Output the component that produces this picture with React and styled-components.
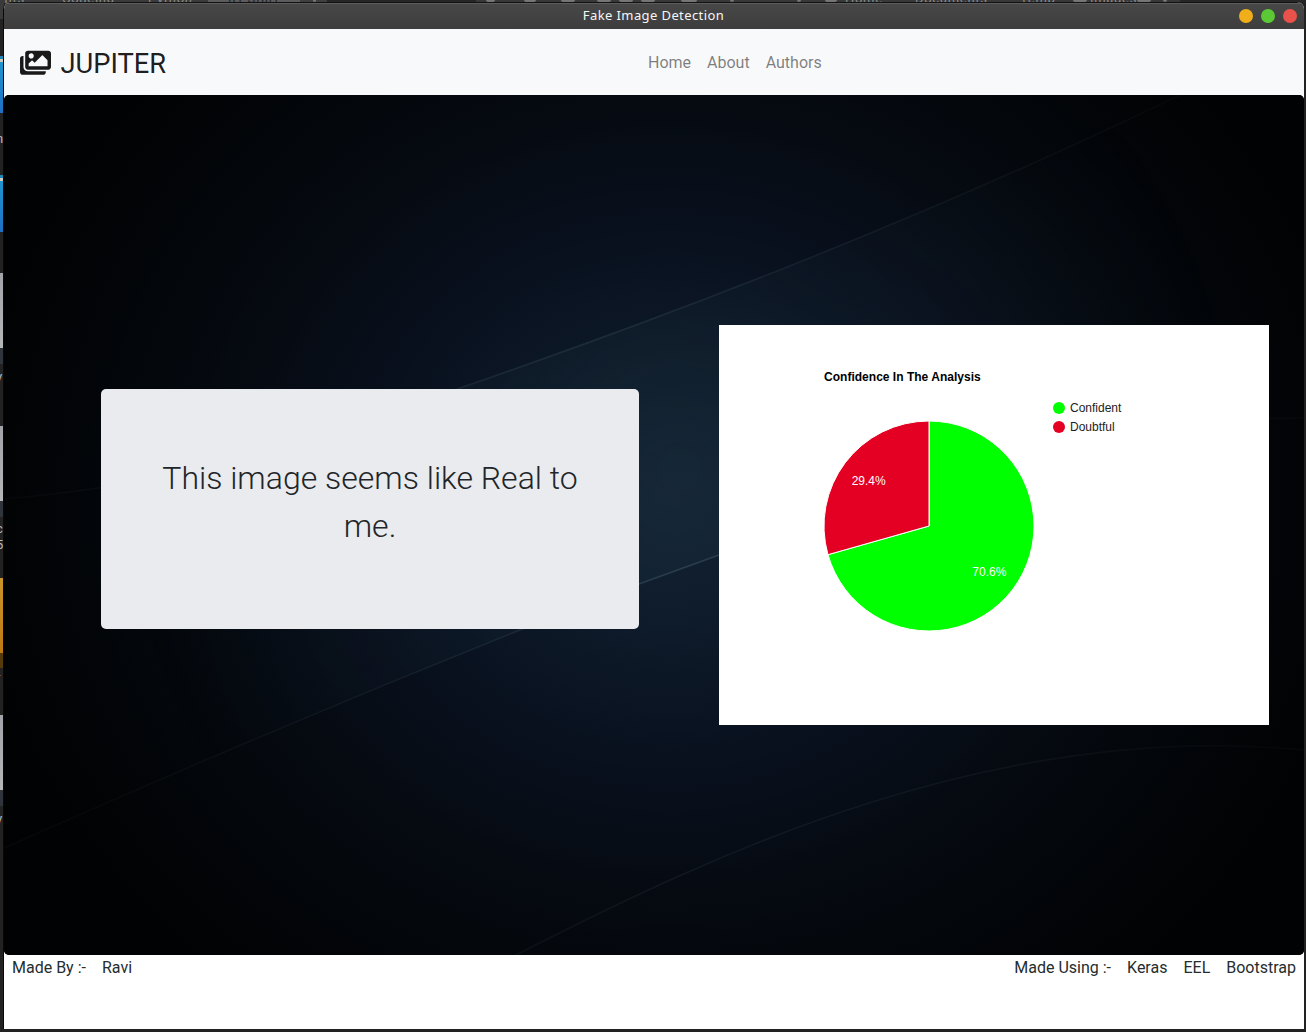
import React from "react";
import styled, { createGlobalStyle } from "styled-components";
import { FaImages } from "react-icons/fa";

const Global = createGlobalStyle`
  * { box-sizing: border-box; }
  html, body { margin: 0; padding: 0; }
  body { background: #1c1c1b; overflow: hidden; font-family: Roboto, "Liberation Sans", sans-serif; }
`;

const Desktop = styled.div`
  position: relative;
  width: 1306px;
  height: 1032px;
  padding: 2px 2px 3px 3px;
  background: #222223;
  overflow: hidden;
`;

const Behind = styled.div`
  position: absolute;
  inset: 0 auto auto 0;
  width: 1306px;
  height: 1032px;
`;

const Strip = styled.div`
  height: 3px;
  width: 1306px;
  background: linear-gradient(90deg, #3a3a3a 0 208px, #5c5c5c 208px 300px, #3f3f3f 300px 327px, #262626 327px 476px, #383838 476px 1180px, #262626 1180px);
`;

const StripText = styled.span`
  position: absolute;
  top: ${(p) => p.$y}px;
  left: ${(p) => p.$x}px;
  font-size: 13px;
  line-height: 16px;
  letter-spacing: 0.7px;
  color: ${(p) => p.$color || "#8c8c8c"};
  white-space: nowrap;
`;

const StripMark = styled.i`
  position: absolute;
  top: 0;
  left: ${(p) => p.$x}px;
  width: ${(p) => p.$w}px;
  height: 2px;
  border-radius: 0 0 4px 4px;
  background: #757575;
`;

const Tile = styled.div`
  position: absolute;
  left: 0;
  width: 4px;
  top: ${(p) => p.$y}px;
  height: ${(p) => p.$h}px;
  background: ${(p) => p.$bg};
`;

const Window = styled.div`
  position: relative;
  width: 1301px;
  height: 1027px;
  display: flex;
  flex-direction: column;
  border-left: 1px solid #080808;
  border-radius: 7px 7px 0 0;
  background: #fff;
  overflow: hidden;
`;

const TitleBar = styled.header`
  height: 27px;
  flex: none;
  display: grid;
  grid-template-columns: 1fr auto 1fr;
  align-items: center;
  padding: 0 7px 0 6px;
  border-top: 1px solid #131313;
  background: linear-gradient(#484848, #3d3d3d);
  box-shadow: inset 0 1px #5c5c5c;
`;

const Title = styled.h1`
  grid-column: 2;
  margin: 0;
  padding-bottom: 2px;
  font: 400 13px/18px "Noto Sans", sans-serif;
  letter-spacing: 0.4px;
  color: #f6f6f6;
`;

const Controls = styled.div`
  display: flex;
  gap: 8px;
  justify-content: flex-end;
`;

const Control = styled.i`
  width: 14px;
  height: 14px;
  border-radius: 50%;
  background: ${(p) => p.$color};
`;

const Nav = styled.nav`
  height: 66px;
  flex: none;
  display: flex;
  align-items: center;
  padding: 2px 16px 0;
  background: #f8f9fb;
`;

const Brand = styled.div`
  display: flex;
  align-items: center;
  gap: 9.5px;
  width: 628px;
  font-size: 27.3px;
  line-height: 42px;
  color: rgba(0, 0, 0, 0.9);
  svg { width: 31px; height: 27.5px; }
`;

const BrandName = styled.span`
  padding-top: 2px;
`;

const NavLinks = styled.div`
  display: flex;
  gap: 16px;
  font-size: 16px;
  line-height: 24px;
  color: rgba(0, 0, 0, 0.5);
`;

const Hero = styled.main`
  position: relative;
  height: 860px;
  flex: none;
  display: flex;
  align-items: flex-start;
  border-radius: 5px;
  overflow: hidden;
  background: #020306;
`;

const Backdrop = styled.svg`
  position: absolute;
  inset: 0;
`;

const Verdict = styled.section`
  position: relative;
  width: 538px;
  height: 240px;
  margin: 294px 0 0 97px;
  padding: 65px 32px 63px;
  border-radius: 5px;
  background: #e9ebee;
  text-align: center;
  font-size: 32px;
  font-weight: 300;
  line-height: 48px;
  color: #212529;
`;

const ChartPanel = styled.section`
  position: relative;
  width: 550px;
  height: 400px;
  margin: 230px 0 0 80px;
  background: #fff;
  svg { display: block; font-family: "Liberation Sans", Arial, sans-serif; font-size: 12px; }
`;

const Footer = styled.footer`
  display: flex;
  justify-content: space-between;
  padding: 1px 8px 0;
  font-size: 16px;
  line-height: 24px;
  color: #252d2f;
`;

const Credits = styled.div`
  display: flex;
  gap: 16px;
`;

const stripItems = [
  [-3, "ents"], [62, "Codeing"], [148, "Python"], [228, "IIT-Start", "#262626"],
  [845, "Home"], [915, "Documents"], [1020, "Temp"], [1090, "Images"],
];

const stripMarks = [
  [313, 3], [486, 9], [524, 12], [561, 14], [597, 14], [619, 14], [641, 14],
  [681, 16], [730, 4], [797, 4], [825, 12], [1073, 14], [1137, 14], [1163, 4],
];

const tiles = [
  [0, 19, "#3a3a3a"],
  [56, 57, "linear-gradient(#1d86b5 0 3px, #cfc9bb 3px 6px, #1e96cf 6px, #1f6fc4)"],
  [175, 57, "linear-gradient(#1d86b5 0 3px, #cfc9bb 3px 6px, #1e96cf 6px, #1f6fc4)"],
  [273, 75, "linear-gradient(#a0a3a8, #b4b6b8)"], [348, 16, "#30343b"],
  [426, 75, "linear-gradient(#a0a3a8, #b4b6b8)"], [501, 16, "#30343b"],
  [578, 75, "linear-gradient(#c9962a, #bd7a12)"], [653, 15, "#553b0c"],
  [715, 75, "linear-gradient(#a0a3a8, #b4b6b8)"], [790, 16, "#30343b"],
];

const labels = [[131, "n"], [369, "y"], [521, "c"], [537, "5"], [670, "r"], [811, "y"]];

const point = (turn, r) => {
  const a = turn * 2 * Math.PI;
  return `${210 + r * Math.sin(a)},${201 - r * Math.cos(a)}`;
};

function Art() {
  return (
    <Backdrop width="1300" height="860" viewBox="4 95 1300 860">
      <defs>
        <radialGradient id="glow" gradientUnits="userSpaceOnUse" cx="0" cy="0" r="1" gradientTransform="translate(670 500) scale(700 630)">
          <stop offset="0" stopColor="#132333" />
          <stop offset="0.2" stopColor="#0e1b2a" />
          <stop offset="0.4" stopColor="#09111f" />
          <stop offset="0.6" stopColor="#060b13" />
          <stop offset="0.8" stopColor="#03060a" />
          <stop offset="1" stopColor="#010203" />
        </radialGradient>
        <radialGradient id="line" gradientUnits="userSpaceOnUse" cx="660" cy="500" r="650">
          <stop offset="0" stopColor="#5c7a88" stopOpacity="0.42" />
          <stop offset="0.3" stopColor="#4a6474" stopOpacity="0.22" />
          <stop offset="0.7" stopColor="#3a4a55" stopOpacity="0.14" />
          <stop offset="1" stopColor="#3a4a55" stopOpacity="0.07" />
        </radialGradient>
        <linearGradient id="band" gradientUnits="userSpaceOnUse" x1="590" y1="330" x2="700" y2="570">
          <stop offset="0" stopColor="#28414c" stopOpacity="0.15" />
          <stop offset="1" stopColor="#20384a" stopOpacity="0.25" />
        </linearGradient>
        <radialGradient id="fade" gradientUnits="userSpaceOnUse" cx="680" cy="470" r="560">
          <stop offset="0" stopColor="#fff" />
          <stop offset="1" stopColor="#000" />
        </radialGradient>
        <mask id="bandMask"><rect x="4" y="95" width="1300" height="860" fill="url(#fade)" /></mask>
      </defs>
      <rect x="4" y="95" width="1300" height="860" fill="url(#glow)" />
      <path
        mask="url(#bandMask)"
        fill="url(#band)"
        d="M4 499Q235 480 460 388Q850 254 1180 95H1304V418Q1040 418 719 555L639 584L520 630Q260 734 4 848Z"
      />
      <g fill="none" stroke="url(#line)" strokeWidth="1.5">
        <path d="M4 499Q235 480 460 388Q850 254 1180 95" />
        <path d="M4 848Q260 734 520 630L639 584L719 555Q1040 418 1304 418" />
        <path d="M516 955C720 850 1000 720 1304 750" />
      </g>
    </Backdrop>
  );
}

function PieChart() {
  const split = point(0.706, 105);
  return (
    <svg width="550" height="400" viewBox="0 0 550 400">
      <text x="105" y="56" fontWeight="700" fill="#000" textLength="156.7">Confidence In The Analysis</text>
      <path d={`M210,201L210,96A105,105 0 1 1 ${split}Z`} fill="#00ff00" stroke="#fff" />
      <path d={`M210,201L${split}A105,105 0 0 1 210,96Z`} fill="#e40022" stroke="#fff" />
      <text x="132.7" y="160" fill="#fff">29.4%</text>
      <text x="253.3" y="251" fill="#fff">70.6%</text>
      <circle cx="340" cy="83" r="6" fill="#00ff00" />
      <text x="351" y="87" fill="#222">Confident</text>
      <circle cx="340" cy="102" r="6" fill="#e40022" />
      <text x="351" y="106" fill="#222">Doubtful</text>
    </svg>
  );
}

export default function App() {
  return (
    <Desktop>
      <Global />
      <Behind>
        <Strip />
        {stripMarks.map(([x, w]) => <StripMark key={x} $x={x} $w={w} />)}
        {stripItems.map(([x, t, c]) => <StripText key={t} $x={x} $y={-9} $color={c}>{t}</StripText>)}
        {tiles.map(([y, h, bg]) => <Tile key={y} $y={y} $h={h} $bg={bg} />)}
        {labels.map(([y, t]) => <StripText key={y} $x={-4} $y={y} $color="#b9b9b9">{t}</StripText>)}
      </Behind>
      <Window>
        <TitleBar>
          <Title>Fake Image Detection</Title>
          <Controls>
            <Control $color="#f0ae1b" />
            <Control $color="#5bc936" />
            <Control $color="#e9524a" />
          </Controls>
        </TitleBar>
        <Nav>
          <Brand><FaImages /><BrandName>JUPITER</BrandName></Brand>
          <NavLinks><span>Home</span><span>About</span><span>Authors</span></NavLinks>
        </Nav>
        <Hero>
          <Art />
          <Verdict>This image seems like Real to me.</Verdict>
          <ChartPanel><PieChart /></ChartPanel>
        </Hero>
        <Footer>
          <Credits><span>Made By :-</span><span>Ravi</span></Credits>
          <Credits><span>Made Using :-</span><span>Keras</span><span>EEL</span><span>Bootstrap</span></Credits>
        </Footer>
      </Window>
    </Desktop>
  );
}
